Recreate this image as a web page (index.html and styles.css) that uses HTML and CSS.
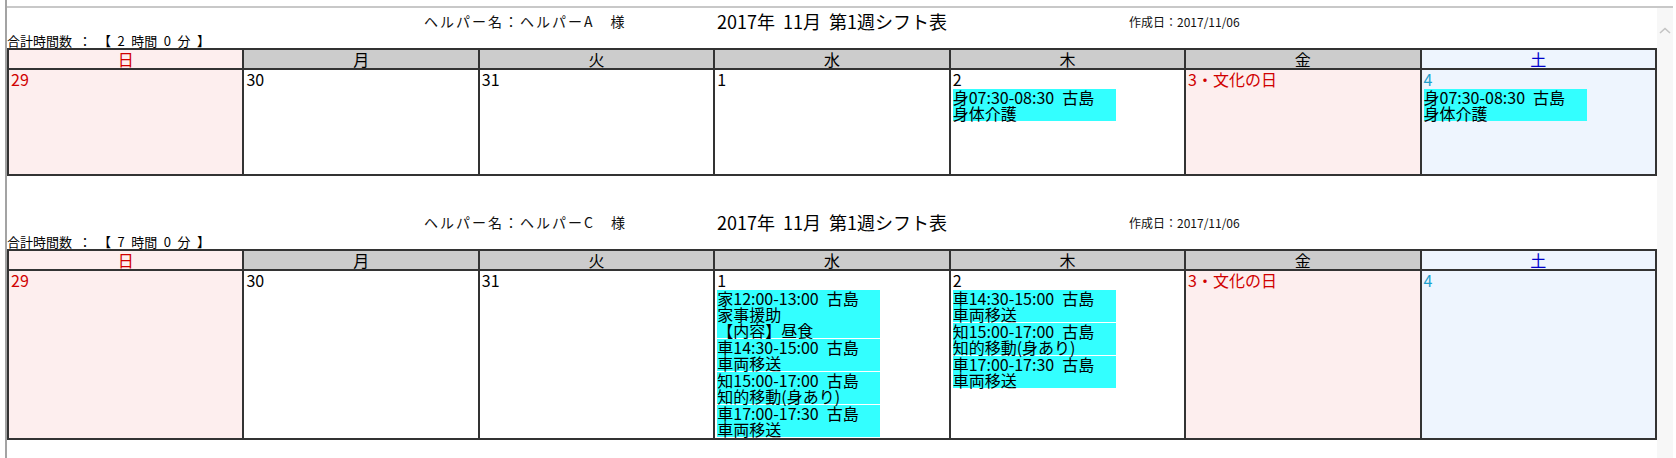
FILE: index.html
```html
<!DOCTYPE html>
<html lang="ja">
<head>
<meta charset="utf-8">
<title>シフト表</title>
<link rel="stylesheet" href="styles.css">
</head>
<body>
<div class="window">
  <div class="frame">
    <main class="content">
      <section class="sheet">
        <header class="sheet-head">
          <span class="helper">ヘルパー名：ヘルパーA　様</span>
          <h1 class="title">2017年 11月 第1週シフト表</h1>
          <span class="created">作成日：2017/11/06</span>
        </header>
        <p class="total">合計時間数&ensp;：&ensp;【&ensp;2&ensp;時間&ensp;0&ensp;分&ensp;】</p>
        <table class="week">
          <thead>
            <tr>
              <th class="sun">日</th><th>月</th><th>火</th><th>水</th><th>木</th><th>金</th><th class="sat">土</th>
            </tr>
          </thead>
          <tbody>
            <tr>
              <td class="sun"><div class="cell"><div class="date red">29</div></div></td>
              <td><div class="cell"><div class="date">30</div></div></td>
              <td><div class="cell"><div class="date">31</div></div></td>
              <td><div class="cell"><div class="date">1</div></div></td>
              <td><div class="cell"><div class="date">2</div>
                <div class="shift">身07:30-08:30&ensp;古島<br>身体介護</div>
              </div></td>
              <td class="holiday"><div class="cell"><div class="date red">3・文化の日</div></div></td>
              <td class="sat"><div class="cell"><div class="date teal">4</div>
                <div class="shift">身07:30-08:30&ensp;古島<br>身体介護</div>
              </div></td>
            </tr>
          </tbody>
        </table>
      </section>

      <section class="sheet">
        <header class="sheet-head">
          <span class="helper">ヘルパー名：ヘルパーC　様</span>
          <h1 class="title">2017年 11月 第1週シフト表</h1>
          <span class="created">作成日：2017/11/06</span>
        </header>
        <p class="total">合計時間数&ensp;：&ensp;【&ensp;7&ensp;時間&ensp;0&ensp;分&ensp;】</p>
        <table class="week">
          <thead>
            <tr>
              <th class="sun">日</th><th>月</th><th>火</th><th>水</th><th>木</th><th>金</th><th class="sat">土</th>
            </tr>
          </thead>
          <tbody>
            <tr>
              <td class="sun"><div class="cell"><div class="date red">29</div></div></td>
              <td><div class="cell"><div class="date">30</div></div></td>
              <td><div class="cell"><div class="date">31</div></div></td>
              <td><div class="cell"><div class="date">1</div>
                <div class="shift">家12:00-13:00&ensp;古島<br>家事援助<br>【内容】昼食</div>
                <div class="shift">車14:30-15:00&ensp;古島<br>車両移送</div>
                <div class="shift">知15:00-17:00&ensp;古島<br>知的移動(身あり)</div>
                <div class="shift">車17:00-17:30&ensp;古島<br>車両移送</div>
              </div></td>
              <td><div class="cell"><div class="date">2</div>
                <div class="shift">車14:30-15:00&ensp;古島<br>車両移送</div>
                <div class="shift">知15:00-17:00&ensp;古島<br>知的移動(身あり)</div>
                <div class="shift">車17:00-17:30&ensp;古島<br>車両移送</div>
              </div></td>
              <td class="holiday"><div class="cell"><div class="date red">3・文化の日</div></div></td>
              <td class="sat"><div class="cell"><div class="date teal">4</div></div></td>
            </tr>
          </tbody>
        </table>
      </section>
    </main>
    <div class="scrollbar">
      <svg class="arrow" width="12" height="7" viewBox="0 0 12 7"><polyline points="1,6 6,1.5 11,6" fill="none" stroke="#c4c4c4" stroke-width="1.6"/></svg>
    </div>
  </div>
</div>
</body>
</html>
```

FILE: styles.css
```css
html, body {
  margin: 0;
  padding: 0;
  background: #ffffff;
}

body {
  font-family: "Noto Sans CJK JP", "Noto Sans", sans-serif;
  color: #000;
}

.window {
  height: 100vh;
  box-sizing: border-box;
  margin-left: 5px;
  padding-top: 6px;
  border-left: 2px solid #a3a3a3;
  display: flex;
  flex-direction: column;
}

.frame {
  flex: 1;
  min-height: 0;
  margin-right: 3px;
  border-top: 2px solid #c8c8c8;
  display: flex;
}

.content {
  flex: 1;
  min-width: 0;
  display: flex;
  flex-direction: column;
  gap: 33px;
  overflow: hidden;
}

.scrollbar {
  width: 16px;
  flex: none;
  background: #f7f7f7;
  display: flex;
  justify-content: center;
  align-items: flex-start;
  padding-top: 19px;
  box-sizing: border-box;
}

.arrow {
  display: block;
}

.sheet-head {
  display: flex;
  align-items: center;
  height: 26px;
  padding-left: 417px;
  white-space: nowrap;
}

.helper {
  width: 293px;
  font-size: 14px;
  letter-spacing: 2px;
  color: #111;
}

.title {
  width: 412px;
  margin: 0;
  font-size: 18px;
  font-weight: normal;
  word-spacing: 4px;
  line-height: 26px;
}

.created {
  font-size: 12px;
  color: #111;
}

.total {
  margin: 0;
  height: 14px;
  font-size: 13px;
  line-height: 14px;
  white-space: nowrap;
}

.week {
  width: 100%;
  table-layout: fixed;
  border-collapse: separate;
  border-spacing: 0;
  border-top: 2px solid #333333;
  border-left: 2px solid #333333;
}

.week th,
.week td {
  border-right: 2px solid #333333;
  border-bottom: 2px solid #333333;
  padding: 0;
}

.week th {
  background: #cccccc;
  font-size: 16px;
  font-weight: normal;
  line-height: 18px;
  height: 18px;
  text-align: center;
}

.week th.sun {
  background: #fdeeee;
  color: #d00000;
}

.week th.sat {
  background: #eef5fe;
  color: #0000cc;
}

.week td {
  vertical-align: top;
  background: #ffffff;
}

.week td.sun,
.week td.holiday {
  background: #fdeeee;
}

.week td.sat {
  background: #eef5fe;
}

.cell {
  min-height: 104px;
  padding-left: 2px;
}

.date {
  font-size: 16px;
  line-height: 19px;
  height: 19px;
  white-space: nowrap;
}

.date.red {
  color: #d00000;
}

.date.teal {
  color: #1ea0cc;
}

.shift {
  width: 163px;
  background: #33ffff;
  font-size: 16px;
  line-height: 16px;
  margin-bottom: 1px;
  white-space: nowrap;
}
```
